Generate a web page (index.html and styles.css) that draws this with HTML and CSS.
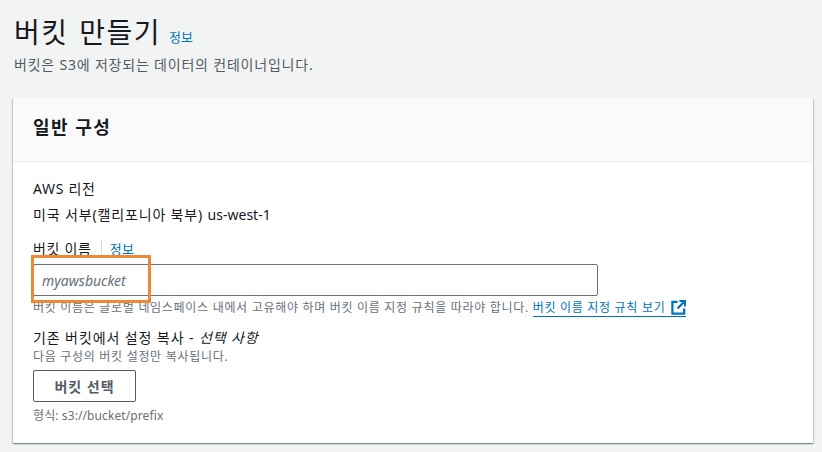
FILE: index.html
```html
<!DOCTYPE html>
<html lang="ko">
<head>
    <meta charset="UTF-8">
    <meta name="viewport" content="width=device-width, initial-scale=1.0">
    <title>버킷 만들기</title>
    <link rel="stylesheet" href="styles.css">
</head>
<body>

<header class="page-head">
    <div class="title-row">
        <h1>버킷 만들기</h1>
        <a class="info-link" href="#">정보</a>
    </div>
    <p class="page-desc">버킷은 S3에 저장되는 데이터의 컨테이너입니다.</p>
</header>

<section class="card">
    <div class="card-head">
        <h2>일반 구성</h2>
    </div>
    <div class="card-body">
        <div class="region">
            <div class="label">AWS 리전</div>
            <div class="value">미국 서부(캘리포니아 북부) <span class="latin">us-west-1</span></div>
        </div>

        <div class="field">
            <div class="label-row">
                <span class="label">버킷 이름</span>
                <a class="info-link small" href="#">정보</a>
            </div>
            <input class="text-input" type="text" placeholder="myawsbucket">
            <div class="highlight"></div>
            <p class="hint">버킷 이름은 글로벌 네임스페이스 내에서 고유해야 하며 버킷 이름 지정 규칙을 따라야 합니다. <a class="rule-link" href="#">버킷 이름 지정 규칙 보기 <svg class="ext-icon" viewBox="0 0 16 16" width="15" height="15"><path d="M7 2H1.5v12.5H14V9" fill="none" stroke="#0073bb" stroke-width="2.4"/><path d="M9 1h6v6M14.5 1.5L7 9" fill="none" stroke="#0073bb" stroke-width="2.4"/></svg></a></p>
        </div>

        <div class="copy">
            <div class="label">기존 버킷에서 설정 복사 - <em>선택 사항</em></div>
            <p class="hint">다음 구성의 버킷 설정만 복사됩니다.</p>
            <button class="select-btn">버킷 선택</button>
            <p class="hint format">형식: s3://bucket/prefix</p>
        </div>
    </div>
</section>

</body>
</html>
```

FILE: styles.css
```css
* {box-sizing: border-box; margin: 0; padding: 0; font-family: "Noto Sans", "Noto Sans CJK KR", sans-serif;}
body {background-color: #f2f3f3; color: #16191f; padding: 0 9px 0 13px; height: 452px; overflow: hidden;}
.page-head {padding: 12px 0 0 1px; height: 98px;}
.title-row {display: flex; align-items: flex-end; height: 40px;}
h1 {font-size: 28px; font-weight: 400; line-height: 40px; letter-spacing: 1.5px; word-spacing: 2px;}
.info-link {color: #0073bb; text-decoration: none; font-size: 13px; margin-left: 8px; line-height: 18px; margin-bottom: 6px;}
.info-link.small {margin: 0; padding-left: 8px; border-left: 1px solid #d5dbdb; font-size: 13px; letter-spacing: .3px;}
.page-desc {font-size: 14px; line-height: 20px; color: #545b64; margin-top: 3px; letter-spacing: .8px;}
.card {background-color: #fff; height: 345px; box-shadow: 0 1px 1px 0 rgba(0, 28, 36, 0.3), 1px 1px 1px 0 rgba(0, 28, 36, 0.15), -1px 1px 1px 0 rgba(0, 28, 36, 0.15);}
.card-head {background-color: #fafafa; height: 64px; border-bottom: 1px solid #eaeded; padding: 17px 20px;}
h2 {font-size: 18px; font-weight: 700; line-height: 24px; letter-spacing: 1.5px;}
.card-body {padding: 17px 20px;}
.label {font-size: 14px; line-height: 20px; letter-spacing: .7px;}
.value {font-size: 14px; line-height: 20px; margin-top: 6px; letter-spacing: .85px;}
.latin {letter-spacing: 0;}
.field {position: relative; margin-top: 14px;}
.label-row {display: flex; align-items: center; gap: 9px; height: 20px;}
.text-input {display: block; width: 565px; height: 32px; margin-top: 5px; padding: 0 8px; border: 1px solid #687078; border-radius: 2px; font-size: 14px; background: #fff;}
.text-input::placeholder {color: #687078; font-style: italic; opacity: 1;}
.highlight {position: absolute; left: -2px; top: 16px; width: 120px; height: 48px; border: 3px solid #ed8936;}
.hint {font-size: 12px; line-height: 18px; color: #687078; letter-spacing: .7px;}
.field .hint {margin-top: 3px; white-space: nowrap;}
.rule-link {color: #0073bb; text-decoration: none; border-bottom: 1px solid #0073bb;}
.ext-icon {vertical-align: -3px; margin-left: 2px; background: #fff;}
.copy {margin-top: 11px;}
.copy .label {letter-spacing: .9px;}
.copy .hint {line-height: 16px; margin-top: 1px;}
.select-btn {display: block; width: 103px; height: 32px; margin-top: 5px; background: #fff; border: 1px solid #545b64; border-radius: 2px; color: #545b64; font-size: 14px; font-weight: 700; letter-spacing: 1px;}
.copy .format {margin-top: 6px; letter-spacing: .1px;}
```
